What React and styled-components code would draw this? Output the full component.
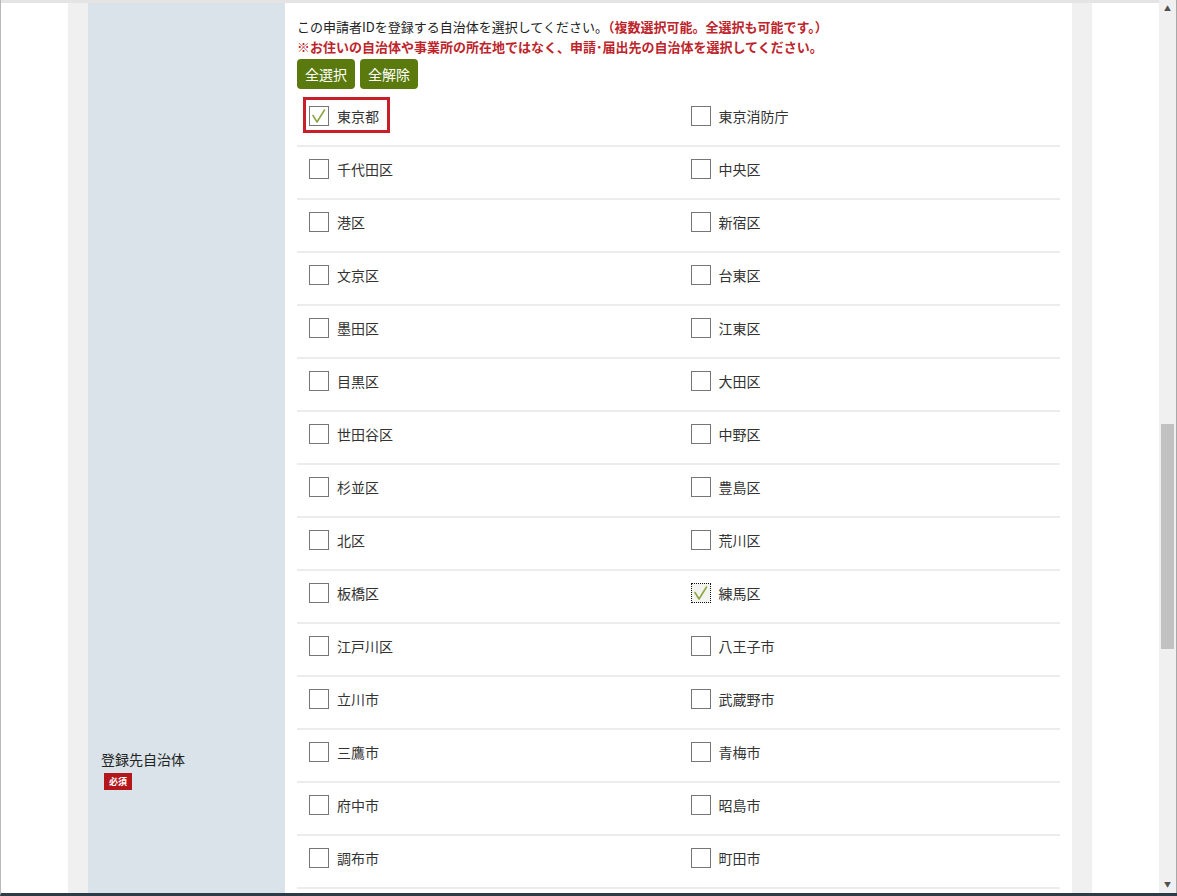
import React from "react";
import styled, { createGlobalStyle, css } from "styled-components";

const Global = createGlobalStyle`
  html, body { margin: 0; padding: 0; height: 100%; overflow: hidden; background: #fff; }
  body { font-family: "Noto Sans CJK JP", "Noto Sans", "Liberation Sans", sans-serif; color: #333; }
  * { box-sizing: border-box; }
`;

const Frame = styled.div`
  width: 1177px;
  height: 896px;
  display: flex;
  flex-direction: column;
  border-left: 1px solid #b9b9b9;
  border-bottom: 3px solid #2e3a46;
  overflow: hidden;
`;

const Body = styled.div`
  flex: 1;
  display: flex;
  min-height: 0;
`;

const Viewport = styled.div`
  flex: 1;
  display: flex;
  flex-direction: column;
  min-height: 0;
  border-top: 3px solid #e4e4e4;
  overflow: hidden;
`;

const PageRow = styled.div`
  flex: 1;
  display: grid;
  grid-template-columns: 67px 20px 984px 20px 1fr;
  min-height: 0;
  overflow: hidden;
`;

const Gutter = styled.div`
  background: ${(p) => (p.$gray ? "#f0f0f0" : "#ffffff")};
`;

const FormTable = styled.div`
  display: grid;
  grid-template-columns: 197px 787px;
  align-items: stretch;
`;

const LabelCell = styled.div`
  background: #d9e3e9;
  padding: 746px 10px 0 13px;
  font-size: 14px;
  line-height: 20px;
  color: #222;
`;

const RequiredBadge = styled.span`
  display: inline-flex;
  align-items: center;
  justify-content: center;
  margin: 3px 0 0 3px;
  width: 28px;
  height: 17px;
  background: #b3171c;
  color: #fff;
  font-size: 9px;
  font-weight: 700;
  line-height: 1;
`;

const ContentCell = styled.div`
  background: #fff;
  padding: 14px 12px 0 12px;
`;

const Note = styled.p`
  margin: 0;
  font-size: 13px;
  line-height: 20px;
  color: #222;
  white-space: nowrap;
`;

const Warn = styled.span`
  color: #bd242b;
  font-weight: 700;
`;

const ButtonBar = styled.div`
  display: flex;
  gap: 5px;
  margin-top: 2px;
`;

const GreenButton = styled.button`
  height: 30px;
  padding: 0 8px;
  border: none;
  border-radius: 4px;
  background: #5a7a0d;
  color: #fff;
  font-family: inherit;
  font-size: 14px;
  line-height: 30px;
  cursor: pointer;
`;

const Grid = styled.div`
  display: grid;
  grid-template-columns: 1fr 1fr;
  margin-top: 5px;
`;

const Cell = styled.div`
  height: 53px;
  padding: 3px 0 0 6px;
  border-bottom: 2px solid #ececec;
  display: flex;
  align-items: flex-start;
`;

const Item = styled.label`
  display: inline-flex;
  align-items: center;
  gap: 8px;
  padding: 6px 8px 4px 3px;
  border: 3px solid transparent;
  font-size: 14px;
  line-height: 20px;
  color: #333;
  ${(p) =>
    p.$highlight &&
    css`
      border-color: #c8202b;
    `}
`;

const Box = styled.span`
  width: 20px;
  height: 20px;
  flex: none;
  display: flex;
  align-items: center;
  justify-content: center;
  background: ${(p) => (p.$focus ? "#f3f4ef" : "#fff")};
  border: 1px ${(p) => (p.$focus ? "dotted #111" : "solid #767676")};
`;

const ScrollBar = styled.div`
  width: 18px;
  display: flex;
  flex-direction: column;
  background: #f0f0f0;
  border-right: 1px solid #a8a8a8;
`;

const Arrow = styled.div`
  height: 17px;
  display: flex;
  align-items: center;
  justify-content: center;
  color: #505050;
  font-size: 7px;
  line-height: 1;
`;

const Track = styled.div`
  flex: 1;
  padding: 407px 2px 0 2px;
`;

const Thumb = styled.div`
  height: 225px;
  background: #c1c1c1;
`;

const Check = () => (
  <svg width="18" height="18" viewBox="0 0 18 18">
    <polyline points="3,8.5 7,15 14.5,3" fill="none" stroke="#8fa445" strokeWidth="1.6" strokeLinejoin="round" strokeLinecap="round" />
  </svg>
);

const items = [
  ["東京都", true, false, true],
  ["東京消防庁"],
  ["千代田区"], ["中央区"],
  ["港区"], ["新宿区"],
  ["文京区"], ["台東区"],
  ["墨田区"], ["江東区"],
  ["目黒区"], ["大田区"],
  ["世田谷区"], ["中野区"],
  ["杉並区"], ["豊島区"],
  ["北区"], ["荒川区"],
  ["板橋区"], ["練馬区", true, true],
  ["江戸川区"], ["八王子市"],
  ["立川市"], ["武蔵野市"],
  ["三鷹市"], ["青梅市"],
  ["府中市"], ["昭島市"],
  ["調布市"], ["町田市"],
];

export default function App() {
  return (
    <>
      <Global />
      <Frame>
        <Body>
          <Viewport>
            <PageRow>
              <Gutter />
              <Gutter $gray />
              <FormTable>
                <LabelCell>
                  <div>登録先自治体</div>
                  <RequiredBadge>必須</RequiredBadge>
                </LabelCell>
                <ContentCell>
                  <Note>
                    この申請者IDを登録する自治体を選択してください。<Warn>（複数選択可能。全選択も可能です。）</Warn>
                  </Note>
                  <Note>
                    <Warn>※お住いの自治体や事業所の所在地ではなく、申請･届出先の自治体を選択してください。</Warn>
                  </Note>
                  <ButtonBar>
                    <GreenButton type="button">全選択</GreenButton>
                    <GreenButton type="button">全解除</GreenButton>
                  </ButtonBar>
                  <Grid>
                    {items.map(([name, checked, focus, highlight]) => (
                      <Cell key={name}>
                        <Item $highlight={highlight}>
                          <Box $focus={focus}>{checked && <Check />}</Box>
                          {name}
                        </Item>
                      </Cell>
                    ))}
                  </Grid>
                </ContentCell>
              </FormTable>
              <Gutter $gray />
              <Gutter />
            </PageRow>
          </Viewport>
          <ScrollBar>
            <Arrow>▲</Arrow>
            <Track>
              <Thumb />
            </Track>
            <Arrow>▼</Arrow>
          </ScrollBar>
        </Body>
      </Frame>
    </>
  );
}
